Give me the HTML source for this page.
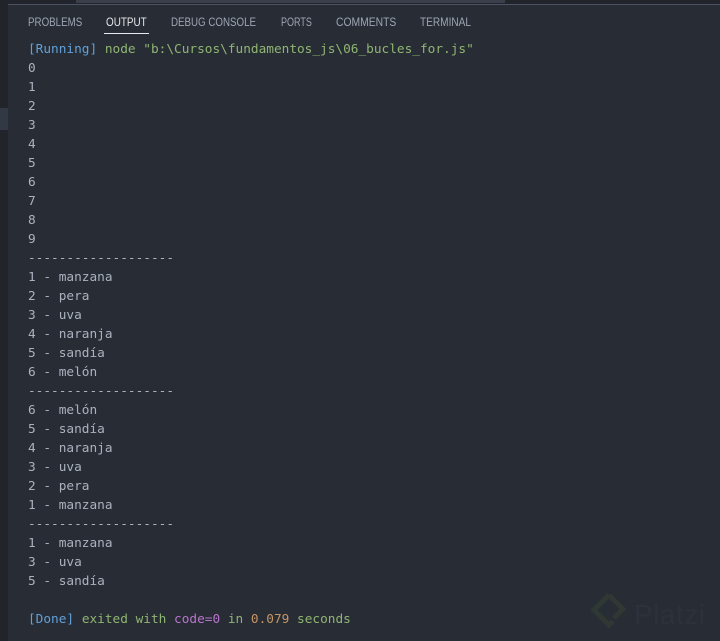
<!DOCTYPE html>
<html><head><meta charset="utf-8"><style>
html,body{margin:0;padding:0;background:#282c34}
#r{position:relative;width:720px;height:641px;overflow:hidden;background:#282c34}
.b{position:absolute}
.t{position:absolute;top:15px;font:11.5px/17px "Liberation Sans",sans-serif;color:#9da5b4;white-space:nowrap;transform-origin:0 50%}
.l{position:absolute;left:28px;height:19px;line-height:19px;font-family:"DejaVu Sans Mono",monospace;font-size:12.78px;color:#abb2bf;white-space:pre}
.k{color:#61a0d8}.g{color:#8fb573}.p{color:#b774cc}.o{color:#c49464}
</style></head><body><div id="r">
<div class="b" style="left:0;top:0;width:8px;height:641px;background:#21252b"></div>
<div class="b" style="left:0;top:108px;width:8px;height:22px;background:#323844"></div>
<div class="b" style="left:0;top:0;width:720px;height:4px;background:#21252b"></div>
<div class="b" style="left:76px;top:0;width:92px;height:3px;background:#3a3f4b"></div>
<div class="b" style="left:85px;top:0;width:420px;height:3px;background:#3a3f4b"></div>
<div class="b" style="left:8px;top:4px;width:712px;height:1px;background:#4b5263"></div>
<div class="t" style="left:28px;transform:scaleX(.849)">PROBLEMS</div>
<div class="t" style="left:106px;color:#e7e9ee;transform:scaleX(.861)">OUTPUT</div>
<div class="b" style="left:104px;top:33px;width:45px;height:1px;background:#e7e9ee"></div>
<div class="t" style="left:171px;transform:scaleX(.847)">DEBUG CONSOLE</div>
<div class="t" style="left:281px;transform:scaleX(.784)">PORTS</div>
<div class="t" style="left:336px;transform:scaleX(.899)">COMMENTS</div>
<div class="t" style="left:420px;transform:scaleX(.877)">TERMINAL</div>
<div class="l k" style="top:40px">[Running] <span class="g">node "b:\Cursos\fundamentos_js\06_bucles_for.js"</span></div>
<div class="l" style="top:59px">0</div>
<div class="l" style="top:78px">1</div>
<div class="l" style="top:97px">2</div>
<div class="l" style="top:116px">3</div>
<div class="l" style="top:135px">4</div>
<div class="l" style="top:154px">5</div>
<div class="l" style="top:173px">6</div>
<div class="l" style="top:192px">7</div>
<div class="l" style="top:211px">8</div>
<div class="l" style="top:230px">9</div>
<div class="l" style="top:249px">-------------------</div>
<div class="l" style="top:268px">1 - manzana</div>
<div class="l" style="top:287px">2 - pera</div>
<div class="l" style="top:306px">3 - uva</div>
<div class="l" style="top:325px">4 - naranja</div>
<div class="l" style="top:344px">5 - sandía</div>
<div class="l" style="top:363px">6 - melón</div>
<div class="l" style="top:382px">-------------------</div>
<div class="l" style="top:401px">6 - melón</div>
<div class="l" style="top:420px">5 - sandía</div>
<div class="l" style="top:439px">4 - naranja</div>
<div class="l" style="top:458px">3 - uva</div>
<div class="l" style="top:477px">2 - pera</div>
<div class="l" style="top:496px">1 - manzana</div>
<div class="l" style="top:515px">-------------------</div>
<div class="l" style="top:534px">1 - manzana</div>
<div class="l" style="top:553px">3 - uva</div>
<div class="l" style="top:572px">5 - sandía</div>
<div class="l k" style="top:610px">[Done] <span class="g">exited with </span><span class="p">code=0</span><span class="g"> in </span><span class="o">0.079</span><span class="g"> seconds</span></div>
<svg class="b" style="left:590px;top:592px" width="36" height="44" viewBox="0 0 36 44"><path d="M19 3 L33 17 L24 26 M19 3 L4 18 L19 33 L23 29" fill="none" stroke="#2f3833" stroke-width="5"/></svg>
<div class="b" style="left:634px;top:597px;font:400 28px/36px 'Liberation Sans',sans-serif;color:#2d313a;white-space:nowrap;letter-spacing:.5px">Platzi</div>
</div></body></html>
